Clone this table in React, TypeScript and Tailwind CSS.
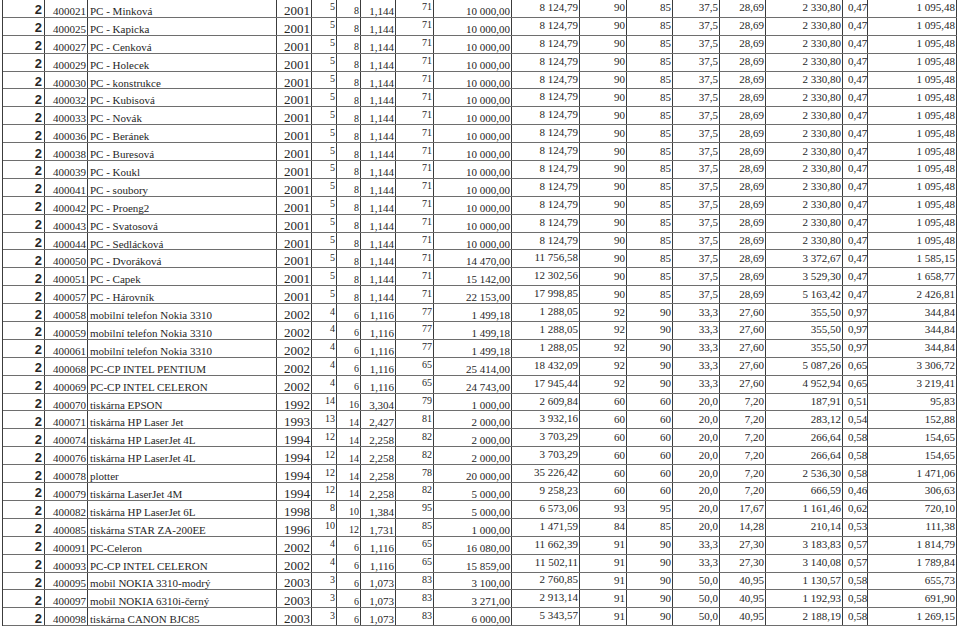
import React from "react";

type Row = string[];

const base1 = ["2001", "5", "8", "1,144", "71"];
const tail1 = ["90", "85", "37,5", "28,69"];
const pcRest = ["10 000,00", "8 124,79", ...tail1, "2 330,80", "0,47", "1 095,48"];

const pcNames = [
  ["400021", "PC - Minková"],
  ["400025", "PC - Kapicka"],
  ["400027", "PC - Cenková"],
  ["400029", "PC - Holecek"],
  ["400030", "PC - konstrukce"],
  ["400032", "PC - Kubisová"],
  ["400033", "PC - Novák"],
  ["400036", "PC - Beránek"],
  ["400038", "PC - Buresová"],
  ["400039", "PC - Koukl"],
  ["400041", "PC - soubory"],
  ["400042", "PC - Proeng2"],
  ["400043", "PC - Svatosová"],
  ["400044", "PC - Sedlácková"],
];

const nokia = ["2002", "4", "6", "1,116", "77", "1 499,18", "1 288,05", "92", "90", "33,3", "27,60", "355,50", "0,97", "344,84"];

const rows: Row[] = [
  ...pcNames.map(([id, name]) => [id, name, ...base1, ...pcRest]),
  ["400050", "PC - Dvoráková", ...base1, "14 470,00", "11 756,58", ...tail1, "3 372,67", "0,47", "1 585,15"],
  ["400051", "PC - Capek", ...base1, "15 142,00", "12 302,56", ...tail1, "3 529,30", "0,47", "1 658,77"],
  ["400057", "PC - Hárovník", ...base1, "22 153,00", "17 998,85", ...tail1, "5 163,42", "0,47", "2 426,81"],
  ["400058", "mobilní telefon Nokia 3310", ...nokia],
  ["400059", "mobilní telefon Nokia 3310", ...nokia],
  ["400061", "mobilní telefon Nokia 3310", ...nokia],
  ["400068", "PC-CP INTEL PENTIUM", "2002", "4", "6", "1,116", "65", "25 414,00", "18 432,09", "92", "90", "33,3", "27,60", "5 087,26", "0,65", "3 306,72"],
  ["400069", "PC-CP INTEL CELERON", "2002", "4", "6", "1,116", "65", "24 743,00", "17 945,44", "92", "90", "33,3", "27,60", "4 952,94", "0,65", "3 219,41"],
  ["400070", "tiskárna EPSON", "1992", "14", "16", "3,304", "79", "1 000,00", "2 609,84", "60", "60", "20,0", "7,20", "187,91", "0,51", "95,83"],
  ["400071", "tiskárna HP Laser Jet", "1993", "13", "14", "2,427", "81", "2 000,00", "3 932,16", "60", "60", "20,0", "7,20", "283,12", "0,54", "152,88"],
  ["400074", "tiskárna HP LaserJet 4L", "1994", "12", "14", "2,258", "82", "2 000,00", "3 703,29", "60", "60", "20,0", "7,20", "266,64", "0,58", "154,65"],
  ["400076", "tiskárna HP LaserJet 4L", "1994", "12", "14", "2,258", "82", "2 000,00", "3 703,29", "60", "60", "20,0", "7,20", "266,64", "0,58", "154,65"],
  ["400078", "plotter", "1994", "12", "14", "2,258", "78", "20 000,00", "35 226,42", "60", "60", "20,0", "7,20", "2 536,30", "0,58", "1 471,06"],
  ["400079", "tiskárna LaserJet 4M", "1994", "12", "14", "2,258", "82", "5 000,00", "9 258,23", "60", "60", "20,0", "7,20", "666,59", "0,46", "306,63"],
  ["400082", "tiskárna HP LaserJet 6L", "1998", "8", "10", "1,384", "95", "5 000,00", "6 573,06", "93", "95", "20,0", "17,67", "1 161,46", "0,62", "720,10"],
  ["400085", "tiskárna STAR ZA-200EE", "1996", "10", "12", "1,731", "85", "1 000,00", "1 471,59", "84", "85", "20,0", "14,28", "210,14", "0,53", "111,38"],
  ["400091", "PC-Celeron", "2002", "4", "6", "1,116", "65", "16 080,00", "11 662,39", "91", "90", "33,3", "27,30", "3 183,83", "0,57", "1 814,79"],
  ["400093", "PC-CP INTEL CELERON", "2002", "4", "6", "1,116", "65", "15 859,00", "11 502,11", "91", "90", "33,3", "27,30", "3 140,08", "0,57", "1 789,84"],
  ["400095", "mobil NOKIA 3310-modrý", "2003", "3", "6", "1,073", "83", "3 100,00", "2 760,85", "91", "90", "50,0", "40,95", "1 130,57", "0,58", "655,73"],
  ["400097", "mobil NOKIA 6310i-černý", "2003", "3", "6", "1,073", "83", "3 271,00", "2 913,14", "91", "90", "50,0", "40,95", "1 192,93", "0,58", "691,90"],
  ["400098", "tiskárna CANON BJC85", "2003", "3", "6", "1,073", "83", "6 000,00", "5 343,57", "91", "90", "50,0", "40,95", "2 188,19", "0,58", "1 269,15"],
];

// per column: width, alignment and vertical placement (mimics the pdf baselines)
const cell = "flex h-full border-r border-[#3c3c3c] whitespace-nowrap";
const high = "items-center justify-end pb-[2px] pr-[1px]";
const mid = "items-center justify-end pb-[1px] pr-[1px]";
const low = "items-center justify-end pt-[6px] pr-[1px]";

const cols = [
  `${cell} w-[43px] ${low} text-[11px]`,
  `${cell} w-[189px] items-center justify-start pt-[6px] pl-[2px] text-[11px]`,
  `${cell} w-[35px] items-center justify-end pt-[4px] pr-[1px] text-[13px]`,
  `${cell} w-[25px] ${high} text-[10px]`,
  `${cell} w-[24px] ${low} text-[10px]`,
  `${cell} w-[35px] ${low} text-[11px]`,
  `${cell} w-[38px] ${high} text-[10px]`,
  `${cell} w-[78px] ${low} text-[11px]`,
  `${cell} w-[68px] ${high} text-[11px]`,
  `${cell} w-[47px] ${mid} text-[11px]`,
  `${cell} w-[46px] ${mid} text-[11px]`,
  `${cell} w-[47px] ${mid} text-[11px]`,
  `${cell} w-[46px] ${mid} text-[11px]`,
  `${cell} w-[77px] ${mid} text-[11px]`,
  `${cell} w-[25px] items-center justify-start pb-[1px] pl-[5px] text-[11px]`,
  `${cell} w-[89px] ${mid} text-[11px]`,
];

export default function App() {
  return (
    <div className="w-[960px] h-[627px] overflow-hidden bg-white text-[#262626] font-['Liberation_Serif',serif]">
      <div className="ml-[2px] w-[955px] border-l border-[#3c3c3c]">
        {rows.map((r, i) => (
          <div key={i} className="flex h-[17.9px] border-b border-[#6e6e6e] leading-none">
            <div className="flex h-full w-[42px] items-center justify-end pt-[3px] pr-[2px] border-r border-[#3c3c3c] font-['Liberation_Sans',sans-serif] font-bold text-[13px]">
              2
            </div>
            {r.map((v, j) => (
              <div key={j} className={cols[j]}>
                {v}
              </div>
            ))}
          </div>
        ))}
      </div>
    </div>
  );
}
